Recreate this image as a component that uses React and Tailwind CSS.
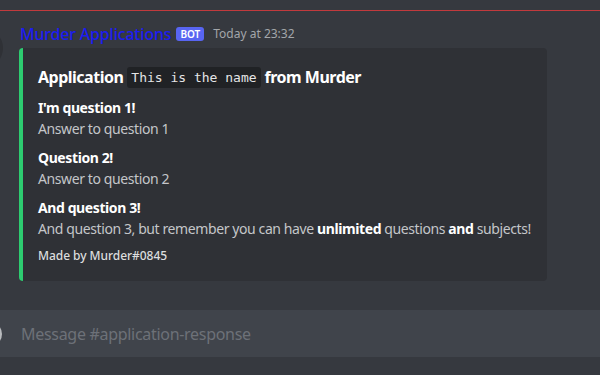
export default function App() {
  return (
    <div
      className="relative w-[600px] h-[375px] overflow-hidden bg-[#36393f]"
      style={{ fontFamily: '"Noto Sans", "Open Sans", sans-serif' }}
    >
      <div className="h-[10px]" />
      <div className="h-px bg-[#c23a3d]" />

      {/* cut-off avatar */}
      <div className="absolute left-[-37px] top-[28px] w-[40px] h-[40px] rounded-full bg-[#2f3136]" />

      <div className="pt-[12px] pl-[20px]">
        <div className="flex items-center h-[22px]">
          <span className="text-[16px] font-medium leading-[22px] text-[#1c1cf0] tracking-[-0.2px]">
            Murder Applications
          </span>
          <span className="ml-[5px] h-[14px] px-[4px] rounded-[3px] bg-[#5865f2] text-white text-[10px] font-semibold leading-[14px]">
            BOT
          </span>
          <span className="ml-[9px] text-[12px] leading-[22px] text-[#a3a6aa]">Today at 23:32</span>
        </div>

        <div className="mt-[3px] ml-[-1px] w-[528px] rounded-[4px] border-l-4 border-[#2dcc70] bg-[#2f3136] pl-[15px] pr-[10px] pt-[18px] pb-[17px]">
          <div className="flex items-center h-[22px] text-[16px] font-bold text-white leading-[22px] tracking-[-0.5px]">
            <span>Application</span>
            <code
              className="mx-[4px] px-[4px] h-[21px] leading-[21px] rounded-[3px] bg-[#202225] text-[13px] font-medium text-[#e4e5e6] tracking-normal"
              style={{ fontFamily: '"DejaVu Sans Mono", "Liberation Mono", monospace' }}
            >
              This is the name
            </code>
            <span>from Murder</span>
          </div>

          <div className="mt-[10px] flex flex-col gap-[8px] text-[14px] tracking-[-0.4px] whitespace-nowrap">
            <Field name="I'm question 1!">Answer to question 1</Field>
            <Field name="Question 2!">Answer to question 2</Field>
            <Field name="And question 3!">
              And question 3, but remember you can have{' '}
              <span className="font-bold text-white">unlimited</span> questions{' '}
              <span className="font-bold text-white">and</span> subjects!
            </Field>
          </div>

          <div className="mt-[8px] h-[16px] text-[12px] leading-[16px] font-medium text-[#dcddde] tracking-[-0.05px]">
            Made by Murder#0845
          </div>
        </div>
      </div>

      {/* message input */}
      <div className="relative mt-[29px] h-[47px] bg-[#40444b] flex items-center pl-[21px]">
        <div className="absolute left-[-22px] top-[12px] w-[24px] h-[24px] rounded-full bg-[#b9bbbe]" />
        <span className="text-[16px] text-[#6d7178] tracking-[-0.3px]">Message #application-response</span>
      </div>
    </div>
  )
}

function Field({ name, children }) {
  return (
    <div>
      <div className="h-[20px] leading-[20px] font-bold text-white">{name}</div>
      <div className="h-[22px] leading-[22px] text-[#c4c6c9]">{children}</div>
    </div>
  )
}
